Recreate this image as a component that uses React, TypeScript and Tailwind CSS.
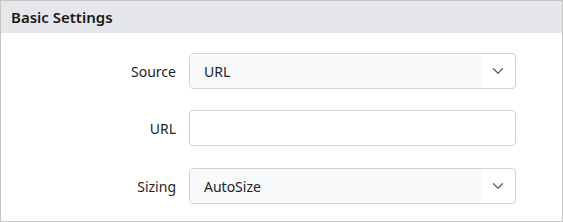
import { ChevronDown } from 'lucide-react';

const font = { fontFamily: '"Noto Sans", "Open Sans", sans-serif' };

function SelectBox({ value }: { value: string }) {
  return (
    <div className="flex h-[36px] w-[327px] overflow-hidden rounded-[4px] border border-[#d0d3d9] bg-white">
      <div className="flex flex-1 items-center bg-[#f8f9fb] pl-[14px] text-[14px] text-[#1f2328]">{value}</div>
      <div className="flex w-[34px] items-center justify-center">
        <ChevronDown size={18} strokeWidth={1.75} className="text-[#5b6170]" />
      </div>
    </div>
  );
}

function Row({ label, children }: { label: string; children: React.ReactNode }) {
  return (
    <div className="flex items-center">
      <div className="w-[175px] text-right text-[14px] text-[#1f2328]">{label}</div>
      <div className="ml-[13px]">{children}</div>
    </div>
  );
}

export default function App() {
  return (
    <div className="h-[222px] w-[563px] border border-[#c4c4c4] bg-white" style={font}>
      <div className="flex h-[32px] items-center bg-[#e5e7eb] px-[10px] text-[15px] font-semibold text-[#1a1a1a]">
        Basic Settings
      </div>
      <div className="flex flex-col gap-[21px] pt-[20px]">
        <Row label="Source">
          <SelectBox value="URL" />
        </Row>
        <Row label="URL">
          <input className="h-[36px] w-[327px] rounded-[4px] border border-[#d0d3d9] bg-white px-[14px] text-[14px] outline-none" />
        </Row>
        <div className="mt-[1px]">
          <Row label="Sizing">
            <SelectBox value="AutoSize" />
          </Row>
        </div>
      </div>
    </div>
  );
}
